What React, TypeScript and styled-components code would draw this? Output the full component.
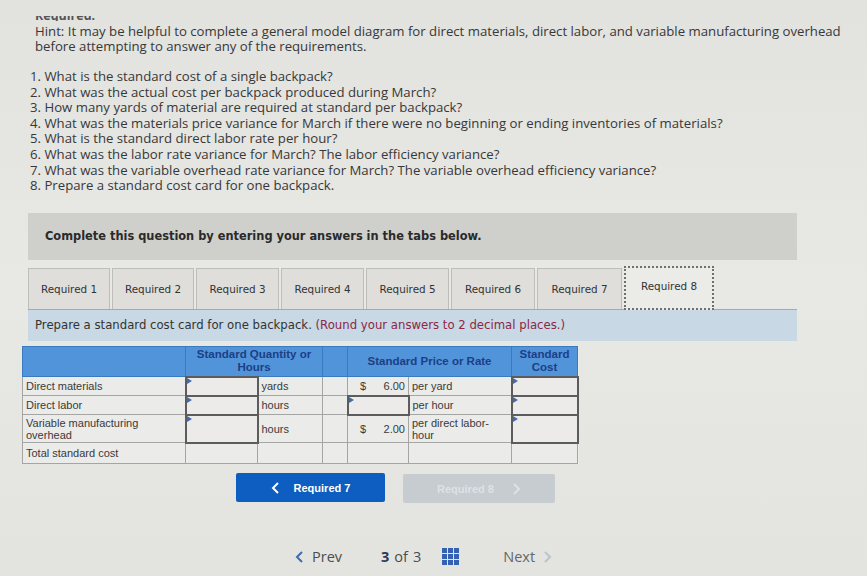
import React from 'react';
import styled, { createGlobalStyle } from 'styled-components';

const GlobalStyle = createGlobalStyle`
  html, body {
    margin: 0;
    padding: 0;
    background: #e4e4e1;
  }
  body {
    font-family: "Open Sans", Lato, sans-serif;
    color: #3a3a3a;
  }
`;

const Page = styled.div`
  width: 867px;
  height: 576px;
  overflow: hidden;
  background: linear-gradient(180deg, #e2e2df 0%, #e8e8e5 50%, #e3e3e0 100%);
`;

// 위쪽 잘린 제목
const CutHeading = styled.div`
  height: 5px;
  overflow: hidden;
  margin: 16px 0 0 35px;
  font-size: 12.5px;
  font-weight: 700;
  line-height: 12px;
  color: #555;
  & > span {
    display: block;
    height: 5px;
    margin-top: -6px;
  }
`;

const Hint = styled.p`
  margin: 3px 0 0 35px;
  width: 818px;
  font-size: 13.2px;
  line-height: 15px;
  color: #383838;
`;

const Questions = styled.ol`
  margin: 15px 0 0 0;
  padding: 0 0 0 30px;
  list-style: none;
  font-size: 13.2px;
  line-height: 15.6px;
  color: #383838;
`;

const Banner = styled.div`
  margin: 19px 70px 0 28px;
  height: 47px;
  background: #cfcfcc;
  display: flex;
  align-items: center;
  padding-left: 17px;
  font-family: "DejaVu Sans", Verdana, sans-serif;
  font-weight: 700;
  font-size: 11.4px;
  color: #2a2a2a;
`;

const TabRow = styled.div`
  margin: 6px 70px 0 28px;
  display: flex;
  align-items: flex-end;
  gap: 2px;
  border-bottom: 1px solid #a9a9a7;
`;

const Tab = styled.div<{ $active?: boolean; $w: number }>`
  width: ${p => p.$w}px;
  height: ${p => (p.$active ? 44 : 41)}px;
  box-sizing: border-box;
  display: flex;
  align-items: center;
  justify-content: center;
  font-family: "DejaVu Sans", Verdana, sans-serif;
  font-size: 10.4px;
  color: #333;
  background: ${p => (p.$active ? '#ebebe8' : '#dfdedb')};
  border: ${p => (p.$active ? '2px dotted #6f6f6f' : '1px solid #bdbdba')};
  border-bottom: ${p => (p.$active ? '2px dotted #6f6f6f' : 'none')};
  margin-bottom: ${p => (p.$active ? '-1px' : '0')};
  padding-bottom: ${p => (p.$active ? '3px' : '0')};
`;

const Prompt = styled.div`
  margin: 0 70px 0 28px;
  height: 31px;
  background: #c8d8e4;
  display: flex;
  align-items: center;
  padding-left: 7px;
  font-family: "DejaVu Sans", Verdana, sans-serif;
  font-size: 11.7px;
  color: #333;
`;

const Red = styled.span`
  color: #8c2747;
`;

const Table = styled.table`
  margin: 5px 0 0 22px;
  width: 555px;
  border-collapse: collapse;
  font-family: "Liberation Sans", Arial, sans-serif;
  font-size: 11px;
  color: #3a3a3a;
  background: #ebebe9;
  table-layout: fixed;
`;

const Col = styled.col<{ $w: number }>`
  width: ${p => p.$w}px;
`;

const Head = styled.th`
  background: #5194da;
  color: #1c3f86;
  font-weight: 700;
  font-size: 11.5px;
  line-height: 13px;
  height: 29px;
  padding: 0 3px;
  border: 1px solid #3a7ac0;
  text-align: center;
`;

const Cell = styled.td<{ $h?: number }>`
  border: 1px solid #a5a5a3;
  height: ${p => p.$h ?? 19}px;
  padding: 0 3px;
  line-height: 12px;
  text-align: left;
  vertical-align: middle;
  box-sizing: border-box;
`;

const InputCell = styled.td<{ $h?: number }>`
  position: relative;
  border: 2px solid #5c5c5c;
  height: ${p => p.$h ?? 19}px;
  padding: 0;
  box-sizing: border-box;
  background: #ecebea;
  &::before {
    content: '';
    position: absolute;
    top: 0;
    left: 0;
    border-left: 5px solid #3f6bb6;
    border-top: 3px solid transparent;
    border-bottom: 3px solid transparent;
  }
`;

const Money = styled.div`
  display: flex;
  justify-content: space-between;
  padding: 0 0 0 9px;
`;

const NavRow = styled.div`
  margin-top: 9px;
  display: flex;
  gap: 18px;
  padding-left: 236px;
`;

const NavButton = styled.div<{ $disabled?: boolean }>`
  width: ${p => (p.$disabled ? 152 : 149)}px;
  height: 29px;
  margin-top: ${p => (p.$disabled ? 1 : 0)}px;
  border-radius: 2px;
  display: flex;
  align-items: center;
  justify-content: center;
  gap: ${p => (p.$disabled ? 18 : 14)}px;
  font-family: "Liberation Sans", Arial, sans-serif;
  font-weight: 700;
  font-size: 11px;
  background: ${p => (p.$disabled ? '#c7ccd1' : '#0d5ec0')};
  color: ${p => (p.$disabled ? '#dde2e8' : '#ffffff')};
`;

const Footer = styled.div`
  margin-top: 44px;
  display: flex;
  align-items: center;
  padding-left: 295px;
  font-family: "Open Sans", Lato, sans-serif;
  font-size: 14.5px;
  color: #4c4c4c;
`;

const FootLink = styled.div<{ $muted?: boolean; $offset?: number }>`
  display: flex;
  align-items: center;
  gap: 8px;
  margin-left: ${p => p.$offset ?? 0}px;
  color: ${p => (p.$muted ? '#666' : '#4c4c4c')};
`;

const Pager = styled.div`
  display: flex;
  align-items: center;
  gap: 5px;
  margin-left: 39px;
  & b {
    color: #2c3c58;
    font-weight: 700;
  }
`;

const GridIcon = styled.div`
  margin-left: 21px;
  display: grid;
  grid-template-columns: repeat(3, 5px);
  gap: 1px;
`;

const Dot = styled.span`
  width: 5px;
  height: 5px;
  background: #3461b1;
`;

const Chevron = ({ color, dir }: { color: string; dir: 'left' | 'right' }) => (
  <svg width="9" height="12" viewBox="0 0 9 12">
    <path
      d={dir === 'left' ? 'M7 1 L2 6 L7 11' : 'M2 1 L7 6 L2 11'}
      fill="none"
      stroke={color}
      strokeWidth="2"
    />
  </svg>
);

const questions = [
  '1. What is the standard cost of a single backpack?',
  '2. What was the actual cost per backpack produced during March?',
  '3. How many yards of material are required at standard per backpack?',
  '4. What was the materials price variance for March if there were no beginning or ending inventories of materials?',
  '5. What is the standard direct labor rate per hour?',
  '6. What was the labor rate variance for March? The labor efficiency variance?',
  '7. What was the variable overhead rate variance for March? The variable overhead efficiency variance?',
  '8. Prepare a standard cost card for one backpack.',
];

const tabs = [82, 82, 83, 83, 83, 84, 85, 90];
const cols = [163, 72, 65, 25, 61, 103, 66];

export default function App() {
  return (
    <Page>
      <GlobalStyle />
      <CutHeading>
        <span>Required:</span>
      </CutHeading>
      <Hint>
        Hint: It may be helpful to complete a general model diagram for direct materials, direct labor, and
        variable manufacturing overhead before attempting to answer any of the requirements.
      </Hint>
      <Questions>
        {questions.map(q => (
          <li key={q}>{q}</li>
        ))}
      </Questions>

      <Banner>Complete this question by entering your answers in the tabs below.</Banner>

      <TabRow>
        {tabs.map((w, i) => (
          <Tab key={i} $w={w} $active={i === 7}>
            Required {i + 1}
          </Tab>
        ))}
      </TabRow>
      <Prompt>
        Prepare a standard cost card for one backpack.&nbsp;<Red>(Round your answers to 2 decimal places.)</Red>
      </Prompt>

      <Table>
        <colgroup>
          {cols.map((w, i) => (
            <Col key={i} $w={w} />
          ))}
        </colgroup>
        <thead>
          <tr>
            <Head />
            <Head colSpan={2}>
              Standard Quantity or
              <br />
              Hours
            </Head>
            <Head />
            <Head colSpan={2}>Standard Price or Rate</Head>
            <Head>
              Standard
              <br />
              Cost
            </Head>
          </tr>
        </thead>
        <tbody>
          <tr>
            <Cell>Direct materials</Cell>
            <InputCell />
            <Cell>yards</Cell>
            <Cell />
            <Cell>
              <Money>
                <span>$</span>
                <span>6.00</span>
              </Money>
            </Cell>
            <Cell>per yard</Cell>
            <InputCell />
          </tr>
          <tr>
            <Cell>Direct labor</Cell>
            <InputCell />
            <Cell>hours</Cell>
            <Cell />
            <InputCell />
            <Cell>per hour</Cell>
            <InputCell />
          </tr>
          <tr>
            <Cell $h={28}>
              Variable manufacturing
              <br />
              overhead
            </Cell>
            <InputCell $h={28} />
            <Cell $h={28}>hours</Cell>
            <Cell $h={28} />
            <Cell $h={28}>
              <Money>
                <span>$</span>
                <span>2.00</span>
              </Money>
            </Cell>
            <Cell $h={28}>
              per direct labor-
              <br />
              hour
            </Cell>
            <InputCell $h={28} />
          </tr>
          <tr>
            <Cell $h={21}>Total standard cost</Cell>
            <Cell $h={21} />
            <Cell $h={21} />
            <Cell $h={21} />
            <Cell $h={21} />
            <Cell $h={21} />
            <Cell $h={21} />
          </tr>
        </tbody>
      </Table>

      <NavRow>
        <NavButton>
          <Chevron color="#ffffff" dir="left" />
          <span>Required 7</span>
        </NavButton>
        <NavButton $disabled>
          <span>Required 8</span>
          <Chevron color="#dde2e8" dir="right" />
        </NavButton>
      </NavRow>

      <Footer>
        <FootLink>
          <Chevron color="#3c6db3" dir="left" />
          <span>Prev</span>
        </FootLink>
        <Pager>
          <b>3</b>
          <span>of</span>
          <span>3</span>
        </Pager>
        <GridIcon>
          {Array.from({ length: 9 }).map((_, i) => (
            <Dot key={i} />
          ))}
        </GridIcon>
        <FootLink $muted $offset={44}>
          <span>Next</span>
          <Chevron color="#b9c3d1" dir="right" />
        </FootLink>
      </Footer>
    </Page>
  );
}
